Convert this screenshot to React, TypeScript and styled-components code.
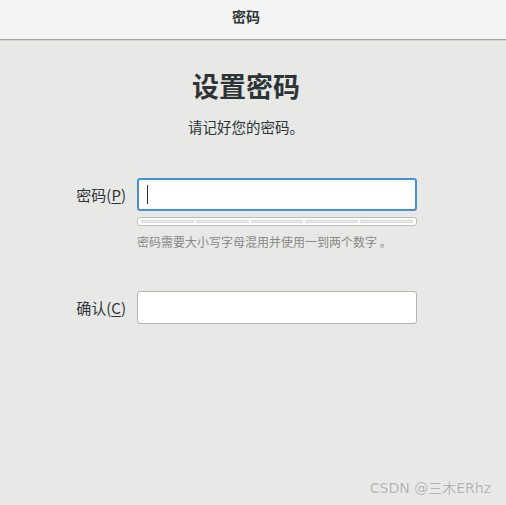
import React from "react";
import styled, { createGlobalStyle } from "styled-components";

const GlobalStyle = createGlobalStyle`
  html, body {
    margin: 0;
    padding: 0;
    height: 100%;
    background: #e8e8e7;
  }
  #root {
    height: 100%;
  }
  body {
    font-family: "Noto Sans CJK SC", "DejaVu Sans", sans-serif;
    color: #2e3436;
  }
`;

const Page = styled.div`
  width: 506px;
  height: 505px;
  display: flex;
  flex-direction: column;
  background: #e8e8e7;
  overflow: hidden;
`;

const HeaderBar = styled.header`
  height: 39px;
  flex-shrink: 0;
  display: flex;
  align-items: center;
  justify-content: center;
  background: #f4f4f4;
  border-bottom: 1px solid #a4a4a2;
  box-shadow: 0 1px 0 #d6d6d4;
`;

const HeaderTitle = styled.div`
  font-size: 14px;
  font-weight: 700;
  color: #2e3436;
  margin-top: -8px;
  margin-left: -14px;
`;

const Body = styled.main`
  flex: 1;
  display: flex;
  flex-direction: column;
  align-items: center;
  position: relative;
`;

const Heading = styled.h1`
  margin: 28px 0 0 -14px;
  font-size: 27px;
  line-height: 36px;
  font-weight: 700;
  color: #2e3436;
`;

const Subtitle = styled.p`
  margin: 13px 0 0 -14px;
  font-size: 14.5px;
  line-height: 20px;
  color: #2e3436;
`;

const Form = styled.div`
  margin-top: 41px;
  display: grid;
  grid-template-columns: 73px 280px;
  column-gap: 11px;
  align-self: flex-start;
  margin-left: 53px;
`;

const Label = styled.label`
  display: flex;
  align-items: center;
  justify-content: flex-end;
  height: 33px;
  font-size: 15px;
  color: #2e3436;
  white-space: nowrap;
`;

const Mnemonic = styled.span`
  text-decoration: underline;
  text-underline-offset: 2px;
`;

const Field = styled.div<{ $gapTop?: number }>`
  display: flex;
  flex-direction: column;
  margin-top: ${(p) => p.$gapTop ?? 0}px;
`;

const LabelCell = styled.div<{ $gapTop?: number }>`
  margin-top: ${(p) => p.$gapTop ?? 0}px;
`;

const Input = styled.div<{ $focused?: boolean }>`
  box-sizing: border-box;
  height: 33px;
  background: #ffffff;
  border: ${(p) => (p.$focused ? "2px solid #4a90d9" : "1px solid #b6b6b3")};
  border-radius: 3px;
  display: flex;
  align-items: center;
  padding-left: ${(p) => (p.$focused ? "8px" : "9px")};
`;

const Caret = styled.span`
  width: 1px;
  height: 19px;
  background: #2e3436;
`;

const Strength = styled.div`
  box-sizing: border-box;
  margin-top: 6px;
  height: 9px;
  border: 1px solid #bdbdbb;
  border-radius: 3px;
  background: #ffffff;
  display: flex;
  gap: 2px;
  padding: 2px 3px;
`;

const Segment = styled.div`
  flex: 1;
  height: 1px;
  border: 1px solid #d4d4d2;
  border-radius: 1px;
  background: #f4f4f4;
`;

const Hint = styled.div`
  margin-top: 8px;
  font-size: 12px;
  line-height: 16px;
  color: #888a85;
  white-space: nowrap;
`;

const Watermark = styled.div`
  position: absolute;
  right: 15px;
  bottom: 8px;
  font-family: "DejaVu Sans", "Noto Sans CJK SC", sans-serif;
  font-size: 14px;
  color: #b2b2b0;
  text-shadow: 0 0 1px #ffffff;
`;

export default function App() {
  return (
    <>
      <GlobalStyle />
      <Page>
        <HeaderBar>
          <HeaderTitle>密码</HeaderTitle>
        </HeaderBar>
        <Body>
          <Heading>设置密码</Heading>
          <Subtitle>请记好您的密码。</Subtitle>
          <Form>
            <LabelCell>
              <Label>
                密码(<Mnemonic>P</Mnemonic>)
              </Label>
            </LabelCell>
            <Field>
              <Input $focused>
                <Caret />
              </Input>
              <Strength>
                {[0, 1, 2, 3, 4].map((i) => (
                  <Segment key={i} />
                ))}
              </Strength>
              <Hint>密码需要大小写字母混用并使用一到两个数字 。</Hint>
            </Field>
            <LabelCell $gapTop={41}>
              <Label>
                确认(<Mnemonic>C</Mnemonic>)
              </Label>
            </LabelCell>
            <Field $gapTop={41}>
              <Input />
            </Field>
          </Form>
          <Watermark>CSDN @三木ERhz</Watermark>
        </Body>
      </Page>
    </>
  );
}
